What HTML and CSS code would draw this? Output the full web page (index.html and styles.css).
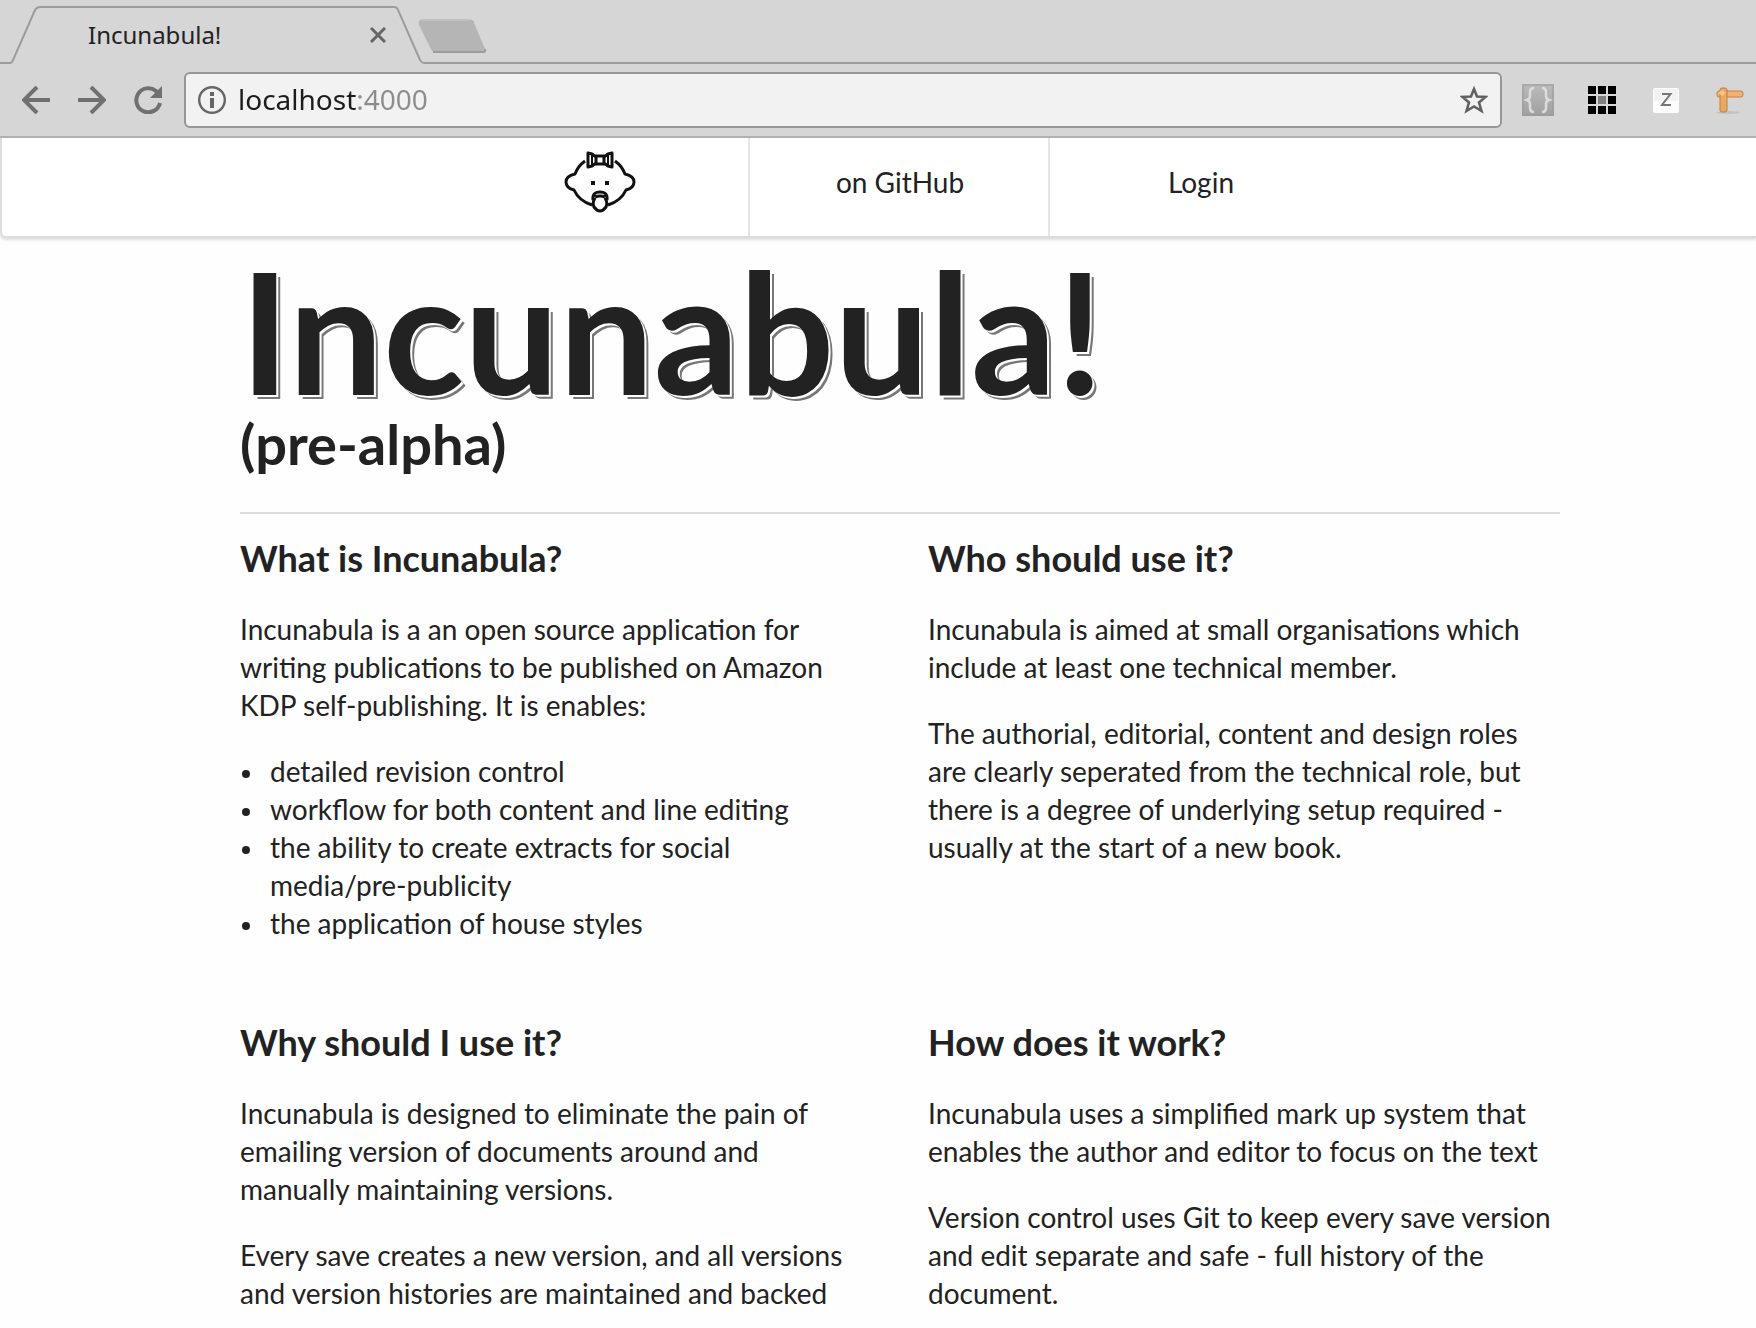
FILE: index.html
```html
<!DOCTYPE html>
<html lang="en">
<head>
<meta charset="utf-8">
<meta name="viewport" content="width=device-width, initial-scale=1">
<title>Incunabula!</title>
<link rel="stylesheet" href="styles.css">
</head>
<body>
<div class="browser">
  <div class="tabstrip">
    <svg class="tab-edge" width="40" height="64" viewBox="0 0 40 64" aria-hidden="true"><path d="M0 63H10Q12 63 13 60L35 10Q37 7 40 7"/></svg>
    <div class="tab">
      <span class="tab-title">Incunabula!</span>
      <button class="icon-button" type="button" aria-label="Close tab">
        <svg width="16" height="16" viewBox="0 0 16 16"><path d="M1 1L15 15M15 1L1 15" stroke="#666" stroke-width="3" fill="none"/></svg>
      </button>
    </div>
    <svg class="tab-edge" width="32" height="64" viewBox="0 0 32 64" aria-hidden="true"><path d="M0 7Q3 7 4 10L26 60Q28 63 30 63H32"/></svg>
    <div class="strip-rest">
      <button class="icon-button new-tab" type="button" aria-label="New tab">
        <svg width="70" height="36" viewBox="0 0 70 36"><path d="M3 2H52Q55 2 56 4L67 30Q68 34 65 34H18Q15 34 14 32L1 6Q0 2 3 2Z" fill="#b5b5b5"/><path d="M1 3Q2 1 4 1H52Q55 1 56 4" fill="none" stroke="#aaa"/><path d="M15 33H65Q68 33 67 30" fill="none" stroke="#9c9c9c" stroke-width="2"/></svg>
      </button>
    </div>
  </div>
  <div class="toolbar">
    <div class="nav-buttons">
      <button class="icon-button" type="button" aria-label="Back"><svg width="28" height="28" viewBox="0 0 28 28" fill="none" stroke="#707070" stroke-width="4"><path d="M28 14H3M15 1L2 14L15 27"/></svg></button>
      <button class="icon-button" type="button" aria-label="Forward"><svg width="28" height="28" viewBox="0 0 28 28" fill="none" stroke="#707070" stroke-width="4"><path d="M0 14H25M13 1L26 14L13 27"/></svg></button>
      <button class="icon-button" type="button" aria-label="Reload"><svg width="28" height="28" viewBox="0 0 28 28" fill="none"><path d="M26 17A12 12 0 1 1 22 5L25 8" stroke="#707070" stroke-width="4"/><path d="M28 0V12H16Z" fill="#707070"/></svg></button>
    </div>
    <div class="address">
      <svg width="28" height="28" viewBox="0 0 28 28" aria-hidden="true"><circle cx="14" cy="14" r="12.8" fill="none" stroke="#666" stroke-width="2.4"/><path d="M12 6H16V10H12ZM12 12H16V22H12Z" fill="#666"/></svg>
      <input class="url" type="text" aria-label="Address" value="localhost:4000">
      <button class="icon-button" type="button" aria-label="Bookmark this page"><svg width="28" height="28" viewBox="0 0 28 28"><path d="M14 3L17 10.500L25.500 11L19 16.500L21.500 25L14 20.500L6.500 25L9 16.500L2.500 11L11 10.500Z" fill="none" stroke="#626262" stroke-width="2.600"/></svg></button>
    </div>
    <div class="extensions">
      <button class="icon-button" type="button" aria-label="JSON viewer"><svg width="32" height="32" viewBox="0 0 32 32"><defs><linearGradient id="g" x2="0" y2="1"><stop stop-color="#bbb"/><stop offset="1" stop-color="#a0a0a0"/></linearGradient></defs><path d="M0 0H32V32H0Z" fill="url(#g)"/><path d="M1 1H31V31H1Z" fill="none" stroke="#999" stroke-opacity=".5" stroke-width="2"/><path d="M12 4Q8 4 8 8V12Q8 15 5 16Q8 17 8 20V24Q8 28 12 28M20 4Q24 4 24 8V12Q24 15 27 16Q24 17 24 20V24Q24 28 20 28" fill="none" stroke="#dcdcdc" stroke-width="2.500"/></svg></button>
      <button class="icon-button" type="button" aria-label="Grid"><svg width="32" height="32" viewBox="0 0 32 32"><path d="M2 2h8v8H2zM12 2h8v8h-8zM22 2h8v8h-8zM2 12h8v8H2zM22 12h8v8h-8zM2 22h8v8H2zM12 22h8v8h-8zM22 22h8v8h-8z"/><path d="M12 12h8v8h-8z" fill="#808080"/></svg></button>
      <button class="icon-button" type="button" aria-label="Zotero"><svg width="32" height="32" viewBox="0 0 32 32"><rect x="3" y="4" width="26" height="25" rx="2" fill="#fcfcfc"/><rect x="4" y="5" width="24" height="12" fill="#f2f2f2"/><path d="M12 10H20.500L12 21H21" fill="none" stroke="#777" stroke-width="2"/></svg></button>
      <button class="icon-button" type="button" aria-label="Page ruler"><svg width="32" height="32" viewBox="0 0 32 32"><ellipse cx="14" cy="28.500" rx="12" ry="1.500" fill="#c2c2c2"/><rect x="3" y="7" width="26" height="6" rx="2" fill="#efb36f" stroke="#cf8040"/><rect x="6" y="4" width="7" height="24" rx="2" fill="#e8a964" stroke="#c77a3c"/><path d="M4 9L8 6L12 9L8 12Z" fill="#f5c58a"/></svg></button>
    </div>
  </div>
</div>

<nav class="menu" aria-label="Main">
  <a class="item" href="#top" aria-label="Home">
    <svg width="72" height="64" viewBox="0 0 72 64" fill="none" stroke="#111" stroke-width="3" stroke-linejoin="round"><path d="M21 11Q14 16 11 24Q2 26 2 32Q2 38 10 40Q15 51 28 55M51 11Q58 16 61 24Q70 26 70 32Q70 38 62 40Q57 51 44 55"/><path d="M32 7L28 4L24 3V17L28 16L32 13M40 7L44 4L48 3V17L44 16L40 13M32 6H40V14H32Z"/><path d="M28 4V16M44 4V16" stroke-width="2"/><path d="M29 50Q28 42 36 42Q44 42 43 50M31 47Q36 45 41 47M31 48Q28 53 30 57Q36 65 42 57Q44 53 41 48"/><path d="M27 33h4M41 33h4" stroke-width="4"/></svg>
  </a>
  <a class="item" href="#github">on GitHub</a>
  <a class="item" href="#login">Login</a>
</nav>

<main class="page" id="top">
  <header class="masthead">
    <h1>Incunabula!</h1>
    <p class="stage">(pre-alpha)</p>
  </header>
  <div class="columns">
    <section>
      <h2>What is Incunabula?</h2>
      <p>Incunabula is a an open source application for writing publications to be published on Amazon KDP self-publishing. It is enables:</p>
      <ul>
        <li><span>detailed revision control</span></li>
        <li><span>workflow for both content and line editing</span></li>
        <li><span>the ability to create extracts for social <span class="keep">media/pre-publicity</span></span></li>
        <li><span>the application of house styles</span></li>
      </ul>
    </section>
    <section>
      <h2>Who should use it?</h2>
      <p>Incunabula is aimed at small organisations which include at least one technical member.</p>
      <p>The authorial, editorial, content and design roles are clearly seperated from the technical role, but there is a degree of underlying setup required - usually at the start of a new book.</p>
    </section>
    <section>
      <h2>Why should I use it?</h2>
      <p>Incunabula is designed to eliminate the pain of emailing version of documents around and manually maintaining versions.</p>
      <p>Every save creates a new version, and all versions and version histories are maintained and backed</p>
    </section>
    <section>
      <h2>How does it work?</h2>
      <p>Incunabula uses a simplified mark up system that enables the author and editor to focus on the text</p>
      <p>Version control uses Git to keep every save version and edit separate and safe - full history of the document.</p>
    </section>
  </div>
</main>
</body>
</html>
```
FILE: styles.css
```css
* { box-sizing: border-box; }

body {
  margin: 0;
  background: #fefefe;
  color: #222;
  font: 28px/38px Lato, "Liberation Sans", sans-serif;
}

svg { display: block; }

.icon-button {
  flex: none;
  padding: 0;
  border: 0;
  background: none;
}

/* Browser frame */
.browser {
  background: #d6d6d6;
  border-bottom: 2px solid #b0b0b0;
  font-family: "Noto Sans", sans-serif;
}

.tabstrip { display: flex; height: 64px; }

.tab-edge {
  flex: none;
  fill: none;
  stroke: #9c9c9c;
  stroke-width: 2;
}

.tab {
  display: flex;
  flex: none;
  align-items: center;
  justify-content: space-between;
  width: 354px;
  height: 58px;
  margin-top: 6px;
  padding: 0 8px 2px 48px;
  border-top: 2px solid #9c9c9c;
  font-size: 24px;
}

.strip-rest {
  flex: 1;
  padding-top: 19px;
  border-bottom: 2px solid #9c9c9c;
}

.new-tab { margin-left: -8px; }

.toolbar {
  display: flex;
  align-items: center;
  gap: 20px;
  height: 72px;
  padding: 0 10px 0 22px;
}

.nav-buttons { display: flex; gap: 28px; margin-right: 2px; }

.address {
  display: flex;
  flex: 1;
  align-items: center;
  gap: 12px;
  height: 56px;
  padding: 0 12px;
  border: 2px solid #969696;
  border-radius: 6px;
  background: #f2f2f2;
}

/* Host in black, port in grey */
.url {
  flex: 1;
  min-width: 0;
  padding: 0 0 2px;
  border: 0;
  outline: 0;
  background: linear-gradient(to right, #1c1c1c 119px, #8c8c8c 119px);
  -webkit-background-clip: text;
  background-clip: text;
  color: transparent;
  font: 28px/40px "Noto Sans", sans-serif;
}

.extensions { display: flex; gap: 32px; }

/* Site menu */
.menu {
  display: flex;
  height: 100px;
  padding-left: 448px;
  border: solid #ddd;
  border-width: 0 0 2px 2px;
  border-bottom-left-radius: 6px;
  background: #fff;
  box-shadow: 0 2px 3px #ddd;
}

.item {
  display: flex;
  align-items: center;
  justify-content: center;
  width: 300px;
  padding: 0 0 10px 2px;
  border-right: 2px solid #e6e6e6;
  color: inherit;
  text-decoration: none;
}

.item:last-child { border-right: 0; }

/* Content */
.page { padding: 0 196px 0 240px; }

.masthead {
  padding: 8px 0 38px;
  border-bottom: 2px solid #ddd;
}

h1 {
  margin: 0;
  font-size: 168px;
  line-height: 168px;
  text-shadow: 2px 2px #fff, 4px 4px #777;
}

.stage {
  margin: 0;
  font-size: 56px;
  font-weight: 700;
  line-height: 60px;
}

.columns {
  display: grid;
  grid-template-columns: 1fr 1fr;
  gap: 50px 56px;
  padding-top: 22px;
}

h2 {
  margin: 0 0 30px;
  font-size: 36px;
  line-height: 44px;
}

p { margin: 0 0 28px; }

ul { margin: 0 0 28px; padding: 0; list-style: none; }

li { display: flex; gap: 20px; }

li::before {
  content: "";
  flex: none;
  width: 8px;
  height: 8px;
  margin: 18px 0 0 2px;
  border-radius: 50%;
  background: #222;
}

.keep { white-space: nowrap; }
```
